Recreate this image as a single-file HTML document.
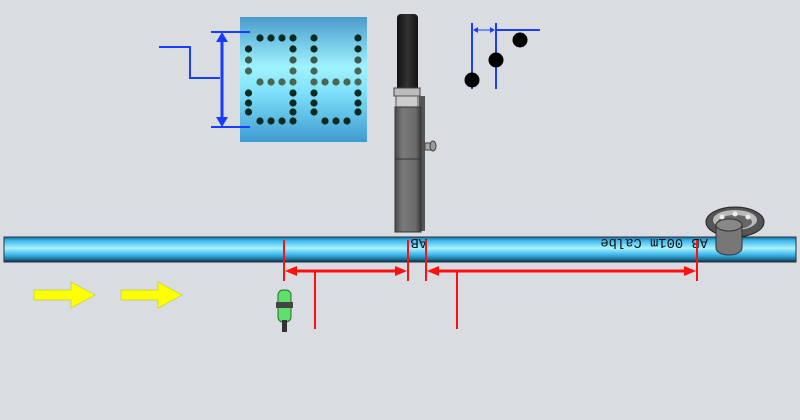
<!DOCTYPE html>
<html><head><style>
html,body{margin:0;padding:0;background:#d9dce1;}
svg{display:block}
</style></head><body>
<svg width="800" height="420" viewBox="0 0 800 420" xmlns="http://www.w3.org/2000/svg">
<defs>
<linearGradient id="pipe" x1="0" y1="0" x2="0" y2="1">
<stop offset="0" stop-color="#1a6f9a"/><stop offset="0.15" stop-color="#3fb8ea"/>
<stop offset="0.45" stop-color="#a8f2ff"/><stop offset="0.72" stop-color="#3ab3e6"/>
<stop offset="0.9" stop-color="#1c6d95"/><stop offset="1" stop-color="#0a2533"/>
</linearGradient>
<linearGradient id="led" x1="0" y1="0" x2="0" y2="1">
<stop offset="0" stop-color="#4a9bcc"/><stop offset="0.4" stop-color="#9ff3ff"/>
<stop offset="0.6" stop-color="#7fe0fb"/><stop offset="1" stop-color="#3f9bd0"/>
</linearGradient>
<linearGradient id="tube" x1="0" y1="0" x2="1" y2="0">
<stop offset="0" stop-color="#111"/><stop offset="0.5" stop-color="#333"/><stop offset="1" stop-color="#111"/>
</linearGradient>
<linearGradient id="body" x1="0" y1="0" x2="1" y2="0">
<stop offset="0" stop-color="#4a4a4a"/><stop offset="0.3" stop-color="#7a7a7a"/><stop offset="0.8" stop-color="#6a6a6a"/><stop offset="1" stop-color="#3a3a3a"/>
</linearGradient>
</defs>
<rect x="240" y="17" width="127" height="125" fill="url(#led)"/>
<g fill="#0d2a1f">
<circle cx="260" cy="38" r="3.6"/><circle cx="271" cy="38" r="3.6"/><circle cx="282" cy="38" r="3.6"/><circle cx="293" cy="38" r="3.6"/>
<circle cx="248.5" cy="49" r="3.6"/><circle cx="293" cy="49" r="3.6"/>
<circle cx="248.5" cy="60" r="3.6" fill="#3c5a48"/><circle cx="293" cy="60" r="3.6" fill="#3c5a48"/>
<circle cx="248.5" cy="71" r="3.6" fill="#4a6652"/><circle cx="293" cy="71" r="3.6" fill="#4a6652"/>
<circle cx="260" cy="82" r="3.6" fill="#4a6652"/><circle cx="271" cy="82" r="3.6" fill="#4a6652"/><circle cx="282" cy="82" r="3.6" fill="#4a6652"/><circle cx="293" cy="82" r="3.6" fill="#4a6652"/>
<circle cx="248.5" cy="93" r="3.6"/><circle cx="293" cy="93" r="3.6"/>
<circle cx="248.5" cy="103" r="3.6"/><circle cx="293" cy="103" r="3.6"/>
<circle cx="248.5" cy="112" r="3.6"/><circle cx="293" cy="112" r="3.6"/>
<circle cx="260" cy="121" r="3.6"/><circle cx="271" cy="121" r="3.6"/><circle cx="282" cy="121" r="3.6"/><circle cx="293" cy="121" r="3.6"/>
<circle cx="314" cy="38" r="3.6"/><circle cx="358" cy="38" r="3.6"/>
<circle cx="314" cy="49" r="3.6"/><circle cx="358" cy="49" r="3.6"/>
<circle cx="314" cy="60" r="3.6" fill="#3c5a48"/><circle cx="358" cy="60" r="3.6" fill="#3c5a48"/>
<circle cx="314" cy="71" r="3.6" fill="#4a6652"/><circle cx="358" cy="71" r="3.6" fill="#4a6652"/>
<circle cx="314" cy="82" r="3.6" fill="#4a6652"/><circle cx="325" cy="82" r="3.6" fill="#4a6652"/><circle cx="336" cy="82" r="3.6" fill="#4a6652"/><circle cx="347" cy="82" r="3.6" fill="#4a6652"/><circle cx="358" cy="82" r="3.6" fill="#4a6652"/>
<circle cx="314" cy="93" r="3.6"/><circle cx="358" cy="93" r="3.6"/>
<circle cx="314" cy="103" r="3.6"/><circle cx="358" cy="103" r="3.6"/>
<circle cx="314" cy="112" r="3.6"/><circle cx="358" cy="112" r="3.6"/>
<circle cx="325" cy="121" r="3.6"/><circle cx="336" cy="121" r="3.6"/><circle cx="347" cy="121" r="3.6"/>
</g>
<g stroke="#1a3cff" stroke-width="2" fill="none">
<polyline points="159,47 190,47 190,78 220,78"/>
<line x1="211" y1="32" x2="250" y2="32"/>
<line x1="211" y1="127" x2="250" y2="127"/>
<line x1="222" y1="38" x2="222" y2="121" stroke-width="3"/>
</g>
<polygon points="222,32 216,42 228,42" fill="#1a3cff"/>
<polygon points="222,127 216,117 228,117" fill="#1a3cff"/>
<g stroke="#1a3cff" stroke-width="2">
<line x1="472" y1="23" x2="472" y2="89"/>
<line x1="496" y1="23" x2="496" y2="89"/>
<line x1="496" y1="30" x2="540" y2="30"/>
<line x1="474" y1="30" x2="494" y2="30" stroke-width="1"/>
</g>
<polygon points="473,30 478,27 478,33" fill="#1a3cff"/><polygon points="495,30 490,27 490,33" fill="#1a3cff"/>
<circle cx="472" cy="80" r="7.5" fill="#000"/>
<circle cx="496" cy="60" r="7.5" fill="#000"/>
<circle cx="520" cy="40" r="7.5" fill="#000"/>
<rect x="397" y="14" width="21" height="78" rx="4" fill="url(#tube)"/>
<rect x="394" y="88" width="26" height="8" fill="#bbb" stroke="#444"/>
<rect x="396" y="96" width="22" height="12" fill="#ccc" stroke="#555"/>
<rect x="419" y="96" width="6" height="135" fill="#555"/>
<rect x="395" y="107" width="26" height="52" fill="url(#body)" stroke="#333"/>
<rect x="395" y="159" width="26" height="73" fill="url(#body)" stroke="#333"/>
<rect x="425" y="143" width="6" height="7" fill="#aaa" stroke="#444"/>
<ellipse cx="433" cy="146" rx="3" ry="5" fill="#999" stroke="#444"/>
<rect x="4" y="237" width="792" height="25" fill="url(#pipe)" stroke="#234" stroke-width="1"/>
<text transform="translate(708,239) rotate(180)" font-family="Liberation Mono, monospace" font-size="13.8" fill="#111">AB 001m Calbe</text>
<text transform="translate(427,239) rotate(180)" font-family="Liberation Mono, monospace" font-size="13.8" fill="#111">AB</text>
<ellipse cx="735" cy="222" rx="29" ry="15" fill="#555" stroke="#222"/>
<ellipse cx="735" cy="220" rx="22" ry="10" fill="#bbb"/>
<ellipse cx="735" cy="222" rx="17" ry="7" fill="#666"/>
<circle cx="722" cy="217" r="2.5" fill="#eee"/><circle cx="735" cy="214" r="2.5" fill="#eee"/><circle cx="748" cy="217" r="2.5" fill="#eee"/>
<path d="M716,225 L716,248 A13,7 0 0 0 742,248 L742,225 Z" fill="#777" stroke="#333"/>
<ellipse cx="729" cy="225" rx="13" ry="6" fill="#888" stroke="#333"/>
<g stroke="#ff1010" stroke-width="2">
<line x1="284" y1="240" x2="284" y2="281"/>
<line x1="408" y1="240" x2="408" y2="281"/>
<line x1="426" y1="240" x2="426" y2="281"/>
<line x1="697" y1="240" x2="697" y2="281"/>
<line x1="288" y1="271" x2="404" y2="271" stroke-width="3"/>
<line x1="430" y1="271" x2="693" y2="271" stroke-width="3"/>
<line x1="315" y1="272" x2="315" y2="329"/>
<line x1="457" y1="272" x2="457" y2="329"/>
</g>
<polygon points="285,271 297,266 297,276" fill="#ff1010"/>
<polygon points="407,271 395,266 395,276" fill="#ff1010"/>
<polygon points="427,271 439,266 439,276" fill="#ff1010"/>
<polygon points="696,271 684,266 684,276" fill="#ff1010"/>
<polygon points="34,290 71,290 71,282 95,295 71,308 71,300 34,300" fill="#ffff00" stroke="#b8cf40" stroke-width="0.7"/>
<polygon points="121,290 158,290 158,282 182,295 158,308 158,300 121,300" fill="#ffff00" stroke="#b8cf40" stroke-width="0.7"/>
<rect x="278" y="290" width="13" height="32" rx="5" fill="#5fe06a" stroke="#2a6a30"/>
<rect x="276" y="302" width="17" height="6" fill="#444"/>
<rect x="282" y="320" width="5" height="12" fill="#333"/>
</svg>
</body></html>
